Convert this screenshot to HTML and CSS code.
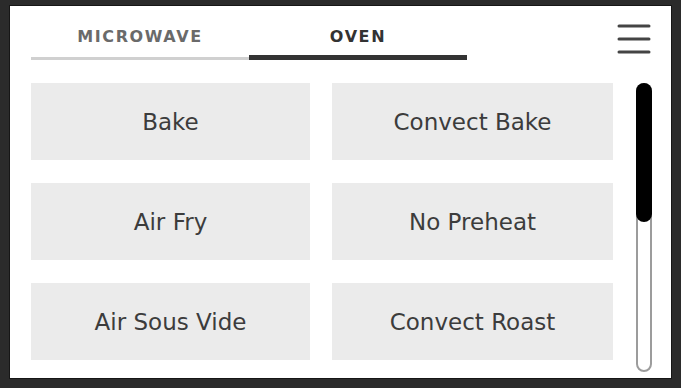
FILE: index.html
```
<!DOCTYPE html>
<html lang="en">
<head>
<meta charset="utf-8">
<title>Oven</title>
<link rel="stylesheet" href="styles.css">
</head>
<body>
<div class="panel">
  <div class="header">
    <div class="tabs">
      <div class="tab">MICROWAVE</div>
      <div class="tab active">OVEN</div>
    </div>
    <svg class="menu" width="34" height="32" viewBox="0 0 34 32">
      <g stroke="#444" stroke-width="3" stroke-linecap="round">
        <line x1="2" y1="3" x2="32" y2="3"/>
        <line x1="2" y1="16" x2="32" y2="16"/>
        <line x1="2" y1="29" x2="32" y2="29"/>
      </g>
    </svg>
  </div>
  <div class="body">
    <div class="grid">
      <div class="btn">Bake</div>
      <div class="btn">Convect Bake</div>
      <div class="btn">Air Fry</div>
      <div class="btn">No Preheat</div>
      <div class="btn">Air Sous Vide</div>
      <div class="btn">Convect Roast</div>
    </div>
    <div class="scroll">
      <div class="thumb"></div>
    </div>
  </div>
</div>
</body>
</html>
```
FILE: styles.css
```
html, body {
  margin: 0;
  padding: 0;
  background: #2b2b2b;
}
body {
  width: 681px;
  height: 388px;
  overflow: hidden;
  padding-top: 6px;
  box-sizing: border-box;
  font-family: "DejaVu Sans", "Liberation Sans", sans-serif;
}
.panel {
  margin-left: 10px;
  width: 661px;
  height: 372px;
  background: #fff;
  box-shadow: 0 0 0 1px #161616;
  box-sizing: border-box;
  padding: 0 19px 0 21px;
  display: flex;
  flex-direction: column;
}
.header {
  height: 77px;
  display: flex;
  align-items: flex-start;
}
.tabs {
  display: flex;
  padding-top: 22px;
}
.tab {
  width: 218px;
  text-align: center;
  line-height: 18px;
  font-size: 16px;
  font-weight: bold;
  letter-spacing: 1.6px;
  color: #6a6a6a;
  padding-bottom: 10px;
  border-bottom: 3px solid #d0d0d0;
}
.tab.active {
  color: #333;
  padding-bottom: 9px;
  border-bottom: 5px solid #333;
}
.menu {
  margin-left: auto;
  margin-top: 17px;
  margin-right: 1px;
}
.body {
  display: flex;
  gap: 23px;
}
.grid {
  display: grid;
  grid-template-columns: 279px 281px;
  grid-auto-rows: 77px;
  column-gap: 22px;
  row-gap: 23px;
}
.btn {
  background: #ebebeb;
  display: flex;
  align-items: center;
  justify-content: center;
  font-size: 23px;
  color: #3c3c3c;
}
.scroll {
  width: 16px;
  height: 289px;
  box-sizing: border-box;
  border: 2px solid #9c9c9c;
  border-radius: 8px;
}
.thumb {
  margin: -2px;
  height: 139px;
  background: #000;
  border-radius: 8px;
}
```
